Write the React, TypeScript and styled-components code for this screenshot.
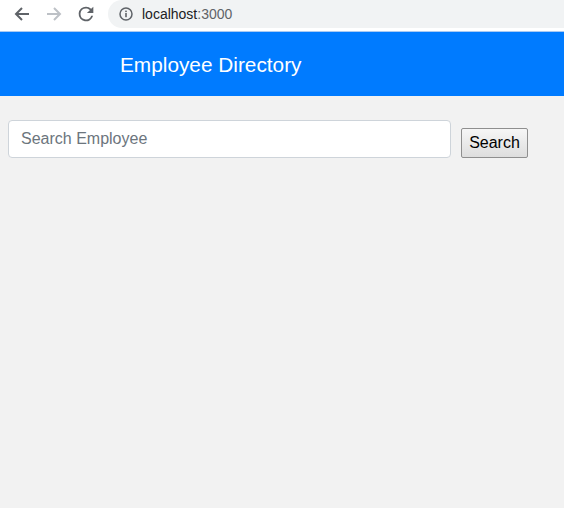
import React from "react";
import styled, { createGlobalStyle } from "styled-components";

const Global = createGlobalStyle`
  html, body { margin: 0; padding: 0; background: #f2f2f2; }
  body { font-family: "Liberation Sans", Arial, sans-serif; }
`;

const Page = styled.div`
  min-height: 508px;
  background: #f2f2f2;
`;

const Chrome = styled.div`
  height: 31px;
  background: #ffffff;
  border-bottom: 1px solid #a9c9f2;
  display: flex;
  align-items: flex-start;
  overflow: hidden;
`;

const NavButton = styled.div<{ $dim?: boolean }>`
  width: 32px;
  height: 28px;
  display: flex;
  align-items: center;
  justify-content: center;
  color: ${(p) => (p.$dim ? "#bdc1c6" : "#5f6368")};
`;

const NavGroup = styled.div`
  display: flex;
  padding-left: 6px;
`;

const UrlPill = styled.div`
  flex: 1;
  height: 28px;
  margin-left: 6px;
  background: #f1f3f4;
  border-radius: 14px 0 0 14px;
  display: flex;
  align-items: center;
  padding-left: 11px;
  gap: 9px;
  font-size: 14px;
  color: #202124;
`;

const Port = styled.span`
  color: #5f6368;
`;

const Header = styled.header`
  height: 64px;
  background: #007bff;
  display: flex;
  align-items: center;
  padding-left: 120px;
  padding-top: 1px;
  box-sizing: border-box;
  color: #ffffff;
  font-size: 20.8px;
`;

const SearchRow = styled.div`
  display: flex;
  align-items: flex-end;
  padding: 24px 8px 0 8px;
`;

const SearchInput = styled.input`
  box-sizing: border-box;
  width: 443px;
  height: 38px;
  border: 1px solid #ced4da;
  border-radius: 4px;
  background: #ffffff;
  padding: 0 12px;
  font-family: "Liberation Sans", Arial, sans-serif;
  font-size: 16px;
  color: #495057;
  outline: none;
  &::placeholder { color: #6c757d; }
`;

const SearchButton = styled.button`
  box-sizing: border-box;
  margin-left: 10px;
  height: 30px;
  width: 67px;
  padding: 0;
  border: 1px solid #8f8f8f;
  border-radius: 2px;
  background: linear-gradient(#f6f6f6, #dedede);
  font-family: "Liberation Sans", Arial, sans-serif;
  font-size: 16px;
  color: #000000;
`;

export default function App() {
  return (
    <Page>
      <Global />
      <Chrome>
        <NavGroup>
          <NavButton>
            <svg width="16" height="16" viewBox="0 0 16 16">
              <path d="M15 8H2.5M8 2L2 8l6 6" fill="none" stroke="currentColor" strokeWidth="2" />
            </svg>
          </NavButton>
          <NavButton $dim>
            <svg width="16" height="16" viewBox="0 0 16 16">
              <path d="M1 8h12.5M8 2l6 6-6 6" fill="none" stroke="currentColor" strokeWidth="2" />
            </svg>
          </NavButton>
          <NavButton>
            <svg width="22" height="22" viewBox="0 0 24 24">
              <path
                d="M17.65 6.35A7.958 7.958 0 0 0 12 4a8 8 0 1 0 7.73 10h-2.08A6 6 0 1 1 12 6c1.66 0 3.14.69 4.22 1.78L13 11h7V4l-2.35 2.35z"
                fill="currentColor"
              />
            </svg>
          </NavButton>
        </NavGroup>
        <UrlPill>
          <svg width="14" height="14" viewBox="0 0 14 14">
            <circle cx="7" cy="7" r="6" fill="none" stroke="#5f6368" strokeWidth="1.5" />
            <rect x="6.2" y="6" width="1.6" height="4.2" fill="#5f6368" />
            <rect x="6.2" y="3.6" width="1.6" height="1.5" fill="#5f6368" />
          </svg>
          <span>
            localhost<Port>:3000</Port>
          </span>
        </UrlPill>
      </Chrome>
      <Header>Employee Directory</Header>
      <SearchRow>
        <SearchInput placeholder="Search Employee" />
        <SearchButton>Search</SearchButton>
      </SearchRow>
    </Page>
  );
}
